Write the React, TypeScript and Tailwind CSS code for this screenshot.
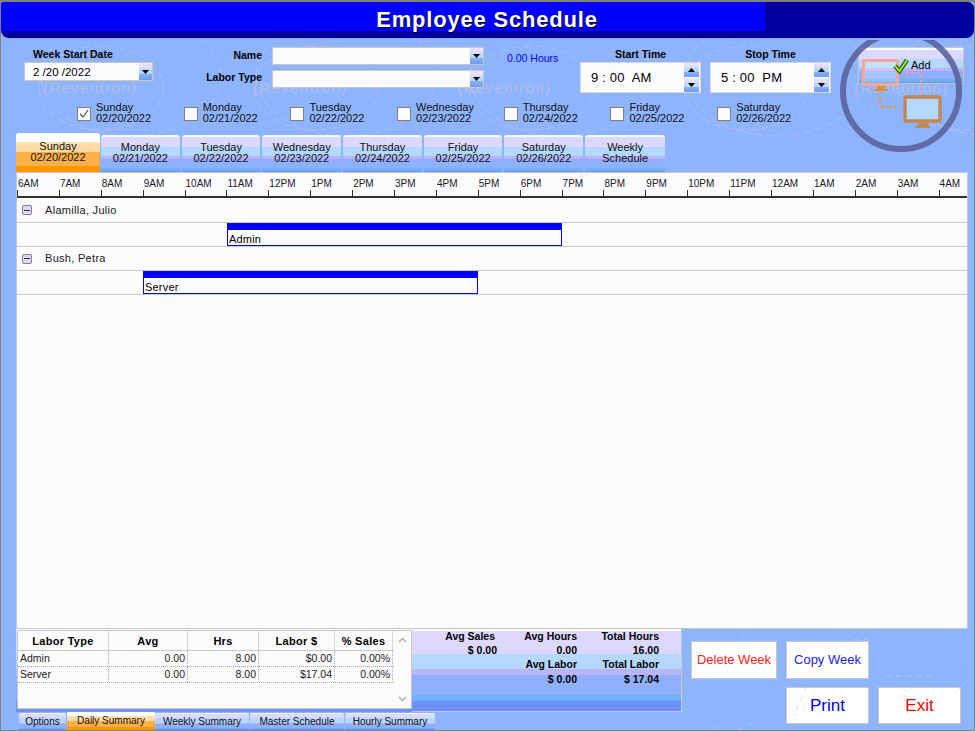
const BAND = "bg-[linear-gradient(180deg,#f4fbff_0%,#f4fbff_5%,#dcd8ff_5%,#dcd8ff_32%,#b4d8ff_32%,#b4d8ff_58%,#bcb4f8_58%,#bcb4f8_66%,#90b0ff_66%,#90b0ff_88%,#6cb0ff_88%,#6cb0ff_96%,#6c90ff_96%)]";
const ACTIVE = "bg-[linear-gradient(180deg,#ffffff_0%,#ffffff_22%,#ffe0b0_22%,#ffd8a0_50%,#ffb048_50%,#ffb048_84%,#ff9800_84%)]";
const SPIN = "bg-[linear-gradient(180deg,#e8e6ff_0%,#dcd8ff_35%,#b4d8ff_35%,#b4d8ff_62%,#90b0ff_62%,#6c9cff_100%)]";

const FONT = "font-['Liberation_Sans',Arial,sans-serif]";

const days = [
  ["Sunday", "02/20/2022"],
  ["Monday", "02/21/2022"],
  ["Tuesday", "02/22/2022"],
  ["Wednesday", "02/23/2022"],
  ["Thursday", "02/24/2022"],
  ["Friday", "02/25/2022"],
  ["Saturday", "02/26/2022"],
];
const hours = ["6AM","7AM","8AM","9AM","10AM","11AM","12PM","1PM","2PM","3PM","4PM","5PM","6PM","7PM","8PM","9PM","10PM","11PM","12AM","1AM","2AM","3AM","4AM"];
const rows = [
  ["Admin", "0.00", "8.00", "$0.00", "0.00%"],
  ["Server", "0.00", "8.00", "$17.04", "0.00%"],
];
const cols = ["w-[91px]", "w-[79px]", "w-[71px]", "w-[76px]", "w-[58px]"];

function Arrow({ up = false }: { up?: boolean }) {
  return (
    <svg width="7" height="4" viewBox="0 0 7 4" className="block">
      <path d={up ? "M3.5 0 7 4H0Z" : "M0 0h7L3.5 4Z"} fill="#000" />
    </svg>
  );
}

function Combo({ w, h, value }: { w: string; h: string; value?: string }) {
  return (
    <div className={`${w} ${h} flex border border-[#c8c8b8] bg-[#fcfcff]`}>
      <div className="flex-1 pl-[8px] text-[11.5px] leading-[18px] whitespace-pre text-black">{value}</div>
      <div className={`w-[13px] flex items-center justify-center ${SPIN}`}>
        <Arrow />
      </div>
    </div>
  );
}

function TimeBox({ label, value }: { label: string; value: string }) {
  return (
    <div className="w-[121px] flex flex-col">
      <div className="h-[24px] pt-[10px] text-center text-[10.5px] leading-[13px] font-bold text-black">{label}</div>
      <div className="h-[31px] flex border border-[#d8d8d0] bg-[#fcfcff]">
        <div className="flex-1 pl-[10px] text-[13px] leading-[29px] tracking-[0.2px] whitespace-pre text-black">{value}</div>
        <div className="w-[15px] mr-[1px] flex flex-col">
          <div className={`h-[14px] mb-[1px] flex items-center justify-center ${SPIN}`}><Arrow up /></div>
          <div className={`h-[14px] flex items-center justify-center ${SPIN}`}><Arrow /></div>
        </div>
      </div>
    </div>
  );
}

function Watermark() {
  const arcs = [30, 245, 460, 675, 890];
  const texts = [
    ["left-[42px]", "(Reventron)"],
    ["left-[252px]", "(Reventron)"],
    ["left-[456px]", "(Reventron)"],
    ["left-[853px]", "(Reventron)"],
  ];
  return (
    <div className="absolute left-0 top-[38px] w-[975px] h-[96px] overflow-hidden pointer-events-none">
      <svg width="975" height="96" className="absolute left-0 top-0">
        {arcs.map((x) => (
          <g key={x} fill="none" stroke="#c4c8f0" strokeWidth="0.8" strokeDasharray="7 5" opacity="0.8">
            <ellipse cx={x + 70} cy="48" rx="62" ry="42" />
            <ellipse cx={x + 100} cy="36" rx="90" ry="60" />
          </g>
        ))}
      </svg>
      {texts.map(([left, t]) => (
        <div key={left} className={`absolute ${left} top-[40px] text-[15px] leading-[16px] tracking-[1.4px] text-[#b4bee4]`}>
          {t}
        </div>
      ))}
    </div>
  );
}

function Scratches() {
  return (
    <svg width="290" height="102" viewBox="0 0 290 102" className="absolute left-[685px] top-[629px] pointer-events-none">
      <g fill="none" stroke="#c4ccf4" strokeWidth="0.8" strokeDasharray="6 4" opacity="0.8">
        <path d="M60 4l-8 5M160 3l14 7 8 -2M120 55l-12 30M66 92l-18 9M200 45l50 0M280 50l-12 14M30 95l-8 6" />
      </g>
    </svg>
  );
}

function Logo() {
  return (
    <svg width="130" height="120" viewBox="0 0 130 120" className="absolute left-[835px] top-[38px] pointer-events-none">
      <circle cx="65" cy="51" r="58" fill="none" stroke="#5a6098" strokeWidth="6" opacity="0.88" />
      <path d="M44 50v17h19" fill="none" stroke="#e09a48" strokeWidth="2.4" strokeDasharray="3 3" />
      <path d="M70 33h15v21" fill="none" stroke="#f0a0a8" strokeWidth="2.2" strokeDasharray="2.5 3" />
      <rect x="27.5" y="20.5" width="34" height="24" fill="#ffffff" opacity="0.22" />
      <rect x="27.5" y="20.5" width="34" height="24" rx="1" fill="none" stroke="#f0a8a0" strokeWidth="3" />
      <path d="M41 46h8v3h3v2H38v-2h3Z" fill="#d89048" />
      <rect x="69" y="57" width="35" height="24" rx="1" fill="#b4d8ff" stroke="#c08850" strokeWidth="3.4" />
      <path d="M83 83h8l4 5H79Z" fill="#c08850" />
      <path d="M59 26l4.5 5L71 20" fill="none" stroke="#1c5c10" strokeWidth="4.4" />
      <path d="M59 26l4.5 5L71 20" fill="none" stroke="#9ce028" strokeWidth="2.2" />
    </svg>
  );
}

export default function App() {
  return (
    <div className={`relative w-[975px] h-[731px] overflow-hidden flex flex-col border border-[#808080] border-t-2 bg-[#8fb4ff] text-black ${FONT}`}>
      <Watermark />
      <div className="relative h-[36px] shrink-0 rounded-b-[8px] rounded-tr-[6px] rounded-tl-[3px] bg-[#0000a0] overflow-hidden">
        <div className="w-[764px] h-[29px] bg-[#0000ff] pl-[208px] text-center text-[22px] leading-[36px] font-bold tracking-[0.8px] text-white [text-shadow:1px_1px_0_#000]">
          Employee Schedule
        </div>
      </div>

      <div className="relative h-[59px] shrink-0 flex pl-[23px]">
        <div className="w-[130px] flex flex-col">
          <div className="h-[24px] pt-[10px] pl-[9px] text-[10.5px] leading-[13px] font-bold">Week Start Date</div>
          <Combo w="w-[129px]" h="h-[19px]" value="2 /20 /2022" />
        </div>
        <div className="w-[108px] pt-[8px] text-right text-[10.5px] font-bold">
          <div className="h-[22px] leading-[18px]">Name</div>
          <div className="h-[18px] leading-[18px]">Labor Type</div>
        </div>
        <div className="ml-[10px] w-[212px] pt-[9px] flex flex-col gap-[5px]">
          <Combo w="w-[212px]" h="h-[18px]" />
          <Combo w="w-[212px]" h="h-[18px]" />
        </div>
        <div className="ml-[23px] w-[73px] pt-[14px] text-[10.5px] leading-[13px] text-[#0000ff]">0.00 Hours</div>
        <TimeBox label="Start Time" value="9 : 00  AM" />
        <div className="w-[9px]" />
        <TimeBox label="Stop Time" value="5 : 00  PM" />
        <div className={`ml-[27px] mt-[9px] w-[106px] h-[37px] border border-[#c8c8b8] ${BAND} pl-[52px] text-[11px] leading-[35px]`}>Add</div>
      </div>

      <div className="relative h-[37px] shrink-0 flex pl-[76px] pt-[5px]">
        {days.map(([d, date], i) => (
          <div key={d} className="w-[106.7px] flex items-start">
            <div className="mt-[5px] w-[14px] h-[14px] border border-[#808078] bg-[#fcfcff] flex items-center justify-center">
              {i === 0 && (
                <svg width="10" height="10" viewBox="0 0 10 10"><path d="M1 5l3 3 5-7" fill="none" stroke="#404040" strokeWidth="1.1" /></svg>
              )}
            </div>
            <div className="ml-[5px] text-[11px] leading-[11px] text-[#101010]">
              <div>{d}</div>
              <div>{date}</div>
            </div>
          </div>
        ))}
      </div>

      <div className="relative h-[38px] shrink-0 flex items-end pl-[15px] gap-[2px] text-[11px] leading-[11px] text-center text-[#101010]">
        {days.map(([d, date], i) => (
          <div
            key={d}
            className={i === 0
              ? `w-[84px] -mr-[1px] h-[39px] pt-[8px] rounded-t-[3px] ${ACTIVE}`
              : `w-[78.7px] h-[37px] pt-[7px] rounded-t-[3px] ${BAND}`}
          >
            <div>{d}</div>
            <div>{date}</div>
          </div>
        ))}
        <div className={`w-[80px] h-[37px] pt-[7px] rounded-t-[3px] ${BAND}`}>
          <div>Weekly</div>
          <div>Schedule</div>
        </div>
      </div>

      <div className="relative ml-[15px] mr-[6px] h-[457px] shrink-0 bg-[#fcfcff] border border-[#c8c8c0] overflow-hidden text-[#202020]">
        <div className="relative h-[25px] border-b-2 border-[#303030] flex">
          {hours.map((h) => (
            <div key={h} className="w-[41.9px] shrink-0 h-[23px] relative">
              <div className="pl-[1px] pt-[5px] text-[10px] leading-[12px] whitespace-nowrap">{h}</div>
              <div className="absolute left-0 bottom-0 w-[1px] h-[6px] bg-[#303030]" />
            </div>
          ))}
        </div>
        {[
          ["Alamilla, Julio", "Admin", "ml-[210px]", "h-[25px]"],
          ["Bush, Petra", "Server", "ml-[126px]", "h-[24px]"],
        ].map(([name, role, ml, gh]) => (
          <div key={name}>
            <div className={`${gh} flex items-center border-b border-[#c8c8c0]`}>
              <div className="ml-[5px] w-[10px] h-[10px] border border-[#808088] rounded-[2px] bg-[#dcd8ff] flex items-center justify-center">
                <div className="w-[6px] h-[1px] bg-[#303030]" />
              </div>
              <div className="ml-[13px] text-[11px] tracking-[0.3px]">{name}</div>
            </div>
            <div className="h-[24px] border-b border-[#c8c8c0]">
              <div className={`${ml} w-[335px] h-[23px] border border-[#0000ff] border-t-0 bg-[#fcfcff]`}>
                <div className="h-[7px] bg-[#0000ff]" />
                <div className="pl-[1px] text-[11px] leading-[18px] tracking-[0.2px] text-black">{role}</div>
              </div>
            </div>
          </div>
        ))}
      </div>

      <div className="relative flex ml-[15px] w-[666px] h-[83px] shrink-0 bg-[linear-gradient(180deg,#f4fbff_0%,#f4fbff_3%,#dcd8ff_3%,#dcd8ff_30%,#b4d8ff_30%,#b4d8ff_48%,#bcb4f8_48%,#bcb4f8_55%,#90b0ff_55%,#90b0ff_80%,#6cb0ff_80%,#6cb0ff_87%,#6c90ff_87%)] text-[10.5px]">
        <div className="w-[395px] h-[79px] mt-[1px] ml-[1px] flex border border-[#c8c8c0] bg-[#fcfcff]">
          <div className="w-[376px]">
            <div className="flex h-[20px] font-bold text-[11px] leading-[20px] border-b border-[#c8c8c0] text-center">
              {["Labor Type", "Avg", "Hrs", "Labor $", "% Sales"].map((c, i) => (
                <div key={c} className={`${cols[i]} border-r border-[#d8d8d0] tracking-[0.3px]`}>{c}</div>
              ))}
            </div>
            {rows.map((r) => (
              <div key={r[0]} className="flex h-[16px] border-b border-dotted border-[#a8a8a8] text-[10.5px] leading-[15px] text-[#202020]">
                {r.map((c, i) => (
                  <div key={i} className={`${cols[i]} border-r border-dotted border-[#a8a8a8] px-[2px] ${i === 0 ? "" : "text-right"}`}>{c}</div>
                ))}
              </div>
            ))}
          </div>
          <div className="flex-1 flex flex-col items-center justify-between py-[6px]">
            <svg width="9" height="6" viewBox="0 0 9 6"><path d="M1 5l3.5-3.5L8 5" fill="none" stroke="#b0b0b0" strokeWidth="1.5" /></svg>
            <svg width="9" height="6" viewBox="0 0 9 6"><path d="M1 1l3.5 3.5L8 1" fill="none" stroke="#b0b0b0" strokeWidth="1.5" /></svg>
          </div>
        </div>
        <div className="w-[270px] h-[83px] border-r border-b border-[#c8c8c0] font-bold text-right leading-[14px] text-[10.5px]">
          <div className="flex h-[14px]"><div className="w-[83px]">Avg Sales</div><div className="w-[82px]">Avg Hours</div><div className="w-[82px]">Total Hours</div></div>
          <div className="flex h-[14px]"><div className="w-[85px]">$ 0.00</div><div className="w-[80px]">0.00</div><div className="w-[82px]">16.00</div></div>
          <div className="flex h-[15px]"><div className="w-[85px]" /><div className="w-[80px]">Avg Labor</div><div className="w-[82px]">Total Labor</div></div>
          <div className="flex h-[15px]"><div className="w-[85px]" /><div className="w-[80px]">$ 0.00</div><div className="w-[82px]">$ 17.04</div></div>
        </div>
        <div className="absolute left-[675px] top-[12px] w-[280px] flex flex-col gap-[8px]">
          <div className="flex gap-[9px]">
            <div className="w-[86px] h-[38px] bg-white border border-[#c8c8c0] text-center text-[13px] leading-[36px] text-[#ff2020]">Delete Week</div>
            <div className="w-[83px] h-[38px] bg-white border border-[#c8c8c0] text-center text-[13px] leading-[36px] text-[#2020ff]">Copy Week</div>
          </div>
          <div className="flex gap-[9px] ml-[95px]">
            <div className="w-[83px] h-[37px] bg-white border border-[#c8c8c0] text-center text-[17px] leading-[35px] text-[#0000ff]">Print</div>
            <div className="w-[83px] h-[37px] bg-white border border-[#c8c8c0] text-center text-[17px] leading-[35px] text-[#ff0000]">Exit</div>
          </div>
        </div>
      </div>

      <div className="relative flex items-start pl-[18px] text-[10px] leading-[17px] text-center text-[#101010]">
        <div className={`w-[47px] h-[17px] mt-[1px] rounded-t-[2px] ${BAND}`}>Options</div>
        <div className={`w-[88px] h-[18px] ml-[1px] ${ACTIVE}`}>Daily Summary</div>
        <div className={`w-[94px] h-[17px] mt-[1px] rounded-t-[2px] ${BAND}`}>Weekly Summary</div>
        <div className={`w-[94px] h-[17px] mt-[1px] ml-[1px] rounded-t-[2px] ${BAND}`}>Master Schedule</div>
        <div className={`w-[90px] h-[17px] mt-[1px] ml-[1px] rounded-t-[2px] ${BAND}`}>Hourly Summary</div>
      </div>

      <Scratches />
      <Logo />
    </div>
  );
}
